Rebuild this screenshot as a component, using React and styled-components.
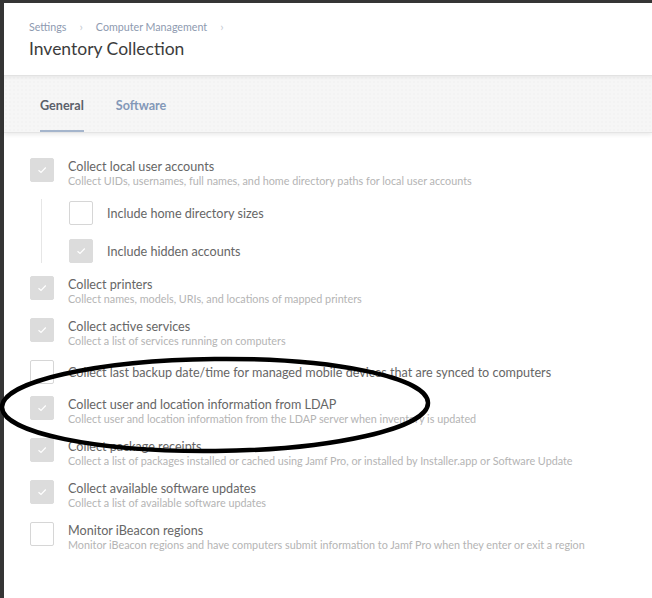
import React from 'react';
import styled, { createGlobalStyle } from 'styled-components';

const items = [
  { title: 'Collect local user accounts', desc: 'Collect UIDs, usernames, full names, and home directory paths for local user accounts', checked: true,
    children: [
      { title: 'Include home directory sizes', checked: false },
      { title: 'Include hidden accounts', checked: true },
    ] },
  { title: 'Collect printers', desc: 'Collect names, models, URIs, and locations of mapped printers', checked: true },
  { title: 'Collect active services', desc: 'Collect a list of services running on computers', checked: true },
  { title: 'Collect last backup date/time for managed mobile devices that are synced to computers', checked: false },
  { title: 'Collect user and location information from LDAP', desc: 'Collect user and location information from the LDAP server when inventory is updated', checked: true },
  { title: 'Collect package receipts', desc: 'Collect a list of packages installed or cached using Jamf Pro, or installed by Installer.app or Software Update', checked: true },
  { title: 'Collect available software updates', desc: 'Collect a list of available software updates', checked: true },
  { title: 'Monitor iBeacon regions', desc: 'Monitor iBeacon regions and have computers submit information to Jamf Pro when they enter or exit a region', checked: false },
];

const Check = ({ checked }) => (
  <Box checked={checked}>
    {checked && (
      <svg width="10" height="8" viewBox="0 0 10 8">
        <polyline points="1.5,4.2 4,6.5 8.8,1.5" fill="none" stroke="#fff" strokeWidth="1.2" />
      </svg>
    )}
  </Box>
);

const App = () => (
  <>
    <GlobalStyle />
    <Panel>
      <Header>
        <Crumbs>
          <span>Settings</span>
          <Chevron>›</Chevron>
          <span>Computer Management</span>
          <Chevron>›</Chevron>
        </Crumbs>
        <Title>Inventory Collection</Title>
      </Header>
      <Tabs>
        <Tab active>General</Tab>
        <Tab>Software</Tab>
      </Tabs>
      <List>
        {items.map(item => (
          <React.Fragment key={item.title}>
            <Row single={!item.desc}>
              <Check checked={item.checked} />
              <Texts>
                <ItemTitle>{item.title}</ItemTitle>
                {item.desc && <ItemDesc>{item.desc}</ItemDesc>}
              </Texts>
            </Row>
            {item.children && (
              <Nested>
                {item.children.map(child => (
                  <Row single key={child.title}>
                    <Check checked={child.checked} />
                    <ItemTitle>{child.title}</ItemTitle>
                  </Row>
                ))}
              </Nested>
            )}
          </React.Fragment>
        ))}
        <Scribble width="440" height="104" viewBox="0 0 440 104">
          <ellipse cx="217" cy="50" rx="213" ry="46" fill="none" stroke="#000" strokeWidth="4.5" transform="rotate(-0.6 217 50)" />
        </Scribble>
      </List>
    </Panel>
  </>
);

const GlobalStyle = createGlobalStyle`
  body {
    margin: 0;
    background: #353535;
    font-family: Lato, "Liberation Sans", sans-serif;
  }
`;

const Panel = styled.div`
  margin: 3px 0 0 4px;
  min-height: 595px;
  background: #fff;
`;

const Header = styled.div`
  height: 73px;
  padding: 16px 0 0 25px;
  box-sizing: border-box;
  border-bottom: 1px solid #e4e4e4;
`;

const Crumbs = styled.div`
  display: flex;
  align-items: center;
  gap: 13px;
  font-size: 10.7px;
  color: #8e9ab0;
  height: 14px;
`;

const Chevron = styled.span`
  color: #c4c9d2;
  font-size: 12px;
`;

const Title = styled.h1`
  margin: 5px 0 0;
  font-size: 17.5px;
  font-weight: 400;
  color: #3c3c3c;
`;

const Tabs = styled.div`
  display: flex;
  gap: 32px;
  height: 57px;
  padding-left: 36px;
  box-sizing: border-box;
  background: #f6f6f6;
  background-image: radial-gradient(#efefef 0.6px, transparent 0.8px);
  background-size: 4px 4px;
  box-shadow: inset 0 4px 4px -3px rgba(0, 0, 0, 0.07), 0 2px 4px rgba(0, 0, 0, 0.08);
  border-bottom: 1px solid #e4e4e4;
`;

const Tab = styled.div`
  display: flex;
  align-items: center;
  padding-top: 4px;
  font-size: 12.6px;
  font-weight: 700;
  color: ${p => (p.active ? '#5b606a' : '#8398b8')};
  border-bottom: 2px solid ${p => (p.active ? '#a5b5cc' : 'transparent')};
`;

const List = styled.div`
  position: relative;
  display: flex;
  flex-direction: column;
  gap: 12px;
  padding: 25px 0 0 26px;
`;

const Row = styled.div`
  display: flex;
  align-items: ${p => (p.single ? 'center' : 'flex-start')};
  gap: 14px;
  min-height: ${p => (p.single ? '24px' : '29px')};
`;

const Box = styled.div`
  flex: none;
  width: 24px;
  height: 24px;
  box-sizing: border-box;
  border-radius: 2px;
  display: flex;
  align-items: center;
  justify-content: center;
  background: ${p => (p.checked ? '#dcdcdc' : '#fff')};
  border: 1px solid ${p => (p.checked ? '#dcdcdc' : '#d6d6d6')};
`;

const Texts = styled.div`
  display: flex;
  flex-direction: column;
  padding-top: 1px;
`;

const ItemTitle = styled.div`
  font-size: 12.6px;
  line-height: 15px;
  color: #666;
`;

const ItemDesc = styled.div`
  font-size: 10.8px;
  line-height: 14px;
  color: #b4b4b4;
`;

const Nested = styled.div`
  display: flex;
  flex-direction: column;
  gap: 14px;
  margin: -1px 0 1px 11px;
  padding: 2px 0 0 27px;
  border-left: 1px solid #e6e6e6;
`;

const Scribble = styled.svg`
  position: absolute;
  left: -6px;
  top: 222px;
  pointer-events: none;
`;

export default App;
